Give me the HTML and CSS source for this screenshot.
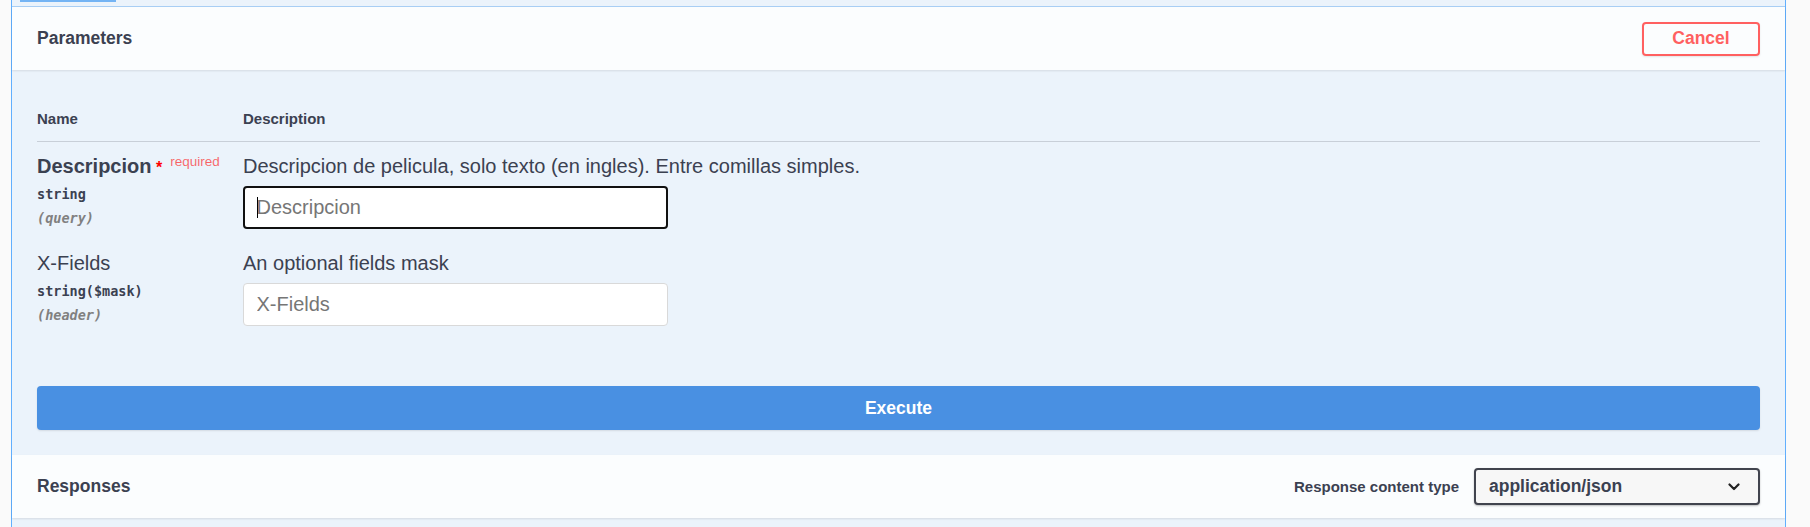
FILE: index.html
```html
<!DOCTYPE html>
<html lang="es">
<head>
<meta charset="utf-8">
<title>Parameters</title>
<link rel="stylesheet" href="styles.css">
</head>
<body>
<div class="opblock">
  <div class="tabstrip"><span class="tab-mark"></span></div>

  <div class="section-header">
    <h4 class="section-title">Parameters</h4>
    <button class="btn-cancel" type="button">Cancel</button>
  </div>

  <div class="table-container">
    <div class="params-head">
      <div class="col-name">Name</div>
      <div class="col-desc">Description</div>
    </div>

    <div class="param-row">
      <div class="col-name">
        <div class="param-name is-required">Descripcion<span class="star">&nbsp;*</span><span class="req">required</span></div>
        <div class="param-type">string</div>
        <div class="param-in">(query)</div>
      </div>
      <div class="col-desc">
        <p class="param-desc">Descripcion de pelicula, solo texto (en ingles). Entre comillas simples.</p>
        <div class="input-wrap">
          <input class="text-input is-focused" type="text" placeholder="Descripcion">
          <span class="caret"></span>
        </div>
      </div>
    </div>

    <div class="param-row">
      <div class="col-name">
        <div class="param-name">X-Fields</div>
        <div class="param-type">string($mask)</div>
        <div class="param-in">(header)</div>
      </div>
      <div class="col-desc">
        <p class="param-desc">An optional fields mask</p>
        <div class="input-wrap">
          <input class="text-input" type="text" placeholder="X-Fields">
        </div>
      </div>
    </div>
  </div>

  <div class="execute-wrapper">
    <button class="btn-execute" type="button">Execute</button>
  </div>

  <div class="section-header">
    <h4 class="section-title">Responses</h4>
    <div class="media-type">
      <span class="media-label">Response content type</span>
      <div class="select-box">
        <span class="select-value">application/json</span>
        <svg class="chevron" width="12" height="8" viewBox="0 0 12 8" aria-hidden="true">
          <path d="M1.5 1.5 L6 6 L10.5 1.5" fill="none" stroke="#222" stroke-width="2.2" stroke-linecap="round" stroke-linejoin="round"/>
        </svg>
      </div>
    </div>
  </div>

  <div class="tail"></div>
</div>
</body>
</html>
```

FILE: styles.css
```css
* { box-sizing: border-box; }

html, body {
  margin: 0;
  padding: 0;
}

body {
  background: #fafafa;
  font-family: "Liberation Sans", Arial, sans-serif;
  color: #3b4151;
  overflow: hidden;
}

.opblock {
  margin-left: 11px;
  width: 1775px;
  border-left: 1px solid #61affe;
  border-right: 1px solid #61affe;
  background: #ebf3fb;
}

.tabstrip {
  height: 7px;
  padding-left: 8px;
  border-bottom: 1px solid #a9cff5;
}

.tab-mark {
  display: block;
  width: 96px;
  height: 2px;
  background: #74b4f4;
}

.section-header {
  display: flex;
  align-items: center;
  justify-content: space-between;
  height: 63px;
  padding: 0 25px;
  background: rgba(255, 255, 255, 0.8);
  box-shadow: 0 1px 2px rgba(0, 0, 0, 0.1);
}

.section-title {
  margin: 0;
  font-size: 17.5px;
  font-weight: 700;
  color: #3b4151;
}

.btn-cancel {
  width: 118px;
  height: 34px;
  border: 2px solid #ff6060;
  border-radius: 4px;
  background: transparent;
  color: #ff6060;
  font-family: "Liberation Sans", Arial, sans-serif;
  font-size: 17.5px;
  font-weight: 700;
  box-shadow: 0 1px 2px rgba(0, 0, 0, 0.1);
  padding: 0;
}

.table-container {
  padding: 25px 25px 25px;
}

.params-head {
  display: flex;
  padding: 15px 0 14px;
  border-bottom: 1px solid rgba(59, 65, 81, 0.2);
  font-size: 15px;
  line-height: 17px;
  font-weight: 700;
}

.col-name {
  flex: 0 0 206px;
}

.col-desc {
  flex: 1 1 auto;
}

.param-row {
  display: flex;
  padding: 13px 0 9px;
}

.param-name {
  font-size: 20px;
  line-height: 23px;
  margin-bottom: 4px;
  white-space: nowrap;
}

.param-name.is-required {
  font-weight: 700;
}

.star {
  position: relative;
  top: 0;
  line-height: 0;
  color: #ff0000;
  font-size: 16px;
  font-weight: 700;
}

.req {
  position: relative;
  top: -7px;
  line-height: 0;
  padding-left: 8px;
  color: rgba(255, 0, 0, 0.6);
  font-size: 13.5px;
  font-weight: 400;
}

.param-type,
.param-in {
  font-family: "DejaVu Sans Mono", "Liberation Mono", monospace;
  font-size: 13.5px;
  line-height: 24px;
  font-weight: 700;
}

.param-in {
  font-style: italic;
  color: #808080;
}

.param-desc {
  margin: 0;
  font-size: 20px;
  line-height: 23px;
}

.input-wrap {
  position: relative;
  width: 425px;
  margin-top: 8px;
}

.text-input {
  display: block;
  width: 425px;
  height: 43px;
  margin: 0;
  padding: 0 12.5px;
  border: 1px solid #d9d9d9;
  border-radius: 4px;
  background: #fff;
  font-family: "Liberation Sans", Arial, sans-serif;
  font-size: 20px;
  color: #3b4151;
  outline: none;
}

.text-input::placeholder {
  color: #767676;
}

.text-input.is-focused {
  border: 2px solid #111;
  padding-left: 11.5px;
}

.caret {
  position: absolute;
  left: 14px;
  top: 11px;
  width: 1px;
  height: 21px;
  background: #000;
}

.execute-wrapper {
  padding: 25px;
}

.btn-execute {
  display: block;
  width: 100%;
  height: 44px;
  border: none;
  border-radius: 4px;
  background: #4990e2;
  color: #fff;
  font-family: "Liberation Sans", Arial, sans-serif;
  font-size: 17.5px;
  font-weight: 700;
  box-shadow: 0 1px 2px rgba(0, 0, 0, 0.1);
}

.media-type {
  display: flex;
  align-items: center;
  gap: 15px;
}

.media-label {
  font-size: 15px;
  font-weight: 700;
  color: #3b4151;
}

.select-box {
  display: flex;
  align-items: center;
  justify-content: space-between;
  width: 286px;
  height: 37px;
  padding: 0 18px 0 13px;
  border: 2px solid #41444e;
  border-radius: 4px;
  background: #f7f7f7;
  box-shadow: 0 1px 2px rgba(0, 0, 0, 0.25);
  font-size: 17.5px;
  font-weight: 700;
  color: #3b4151;
}

.chevron {
  display: block;
}

.tail {
  height: 9px;
}
```
